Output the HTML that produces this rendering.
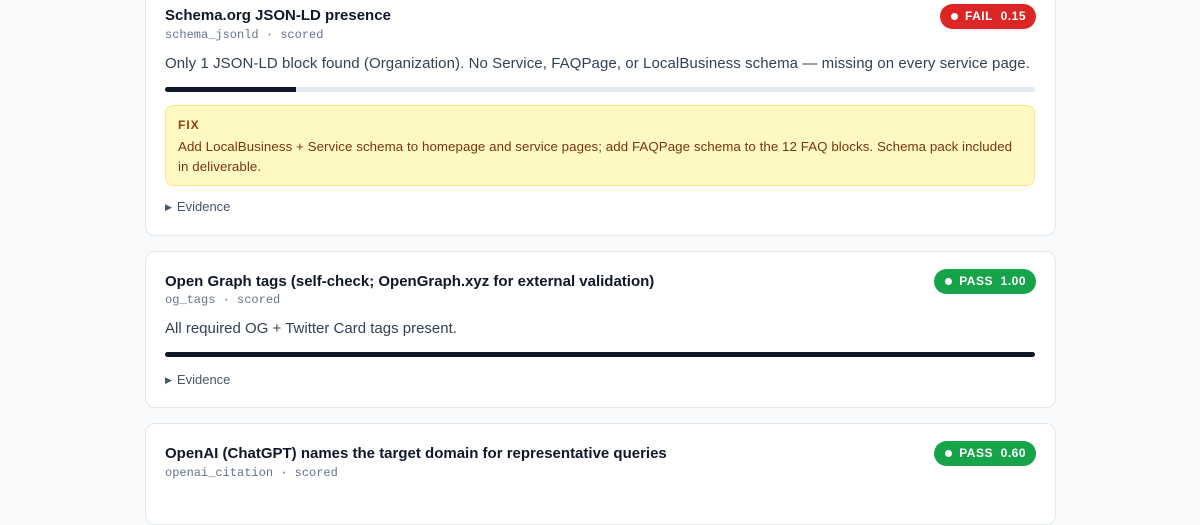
<!DOCTYPE html>
<html><head><style>
body{margin:0;width:1200px;height:470px;overflow:hidden;background:#f8fafc;font-family:"Liberation Sans",sans-serif;position:relative}
.card{position:absolute;left:145px;width:909px;background:#fff;border:1px solid #e2e8f0;border-radius:10px}
.a{position:absolute;white-space:nowrap}
.t{left:19px;font-size:15px;font-weight:bold;color:#0f172a}
.m{left:19px;font-family:"Liberation Mono",monospace;font-size:12px;color:#64748b}
.b{left:19px;font-size:15px;color:#334155}
.bar{left:19px;width:870px;height:5px;background:#e2e8f0;border-radius:3px;overflow:hidden}
.bar i{display:block;height:100%;background:#0f172a}
.ev{left:19px;font-size:13px;color:#475569}
.ev span{font-size:9px;margin-right:5px;position:relative;top:-1px}
.badge{right:19px;height:25px;border-radius:13px;color:#fff;font-size:12px;font-weight:bold;letter-spacing:.5px;line-height:25px;padding:0 10px 0 25px}
.badge:before{content:"";position:absolute;left:11px;top:9px;width:7px;height:7px;border-radius:50%;background:#fff}
</style></head><body>
<div class="card" style="top:-15px;height:249px">
 <div class="a t" style="top:21px">Schema.org JSON-LD presence</div>
 <div class="a m" style="top:42px">schema_jsonld · scored</div>
 <div class="a b" style="top:69px;letter-spacing:.08px">Only 1 JSON-LD block found (Organization). No Service, FAQPage, or LocalBusiness schema — missing on every service page.</div>
 <div class="a bar" style="top:101px"><i style="width:131px"></i></div>
 <div class="a" style="left:19px;top:119px;width:868px;height:79px;background:#fef9c3;border:1px solid #fde68a;border-radius:8px">
  <div class="a" style="left:12px;top:12px;font-size:12px;font-weight:bold;color:#92400e;letter-spacing:1px">FIX</div>
  <div class="a" style="left:12px;top:31px;font-size:13.3px;letter-spacing:.07px;line-height:20px;color:#78350f">Add LocalBusiness + Service schema to homepage and service pages; add FAQPage schema to the 12 FAQ blocks. Schema pack included<br>in deliverable.</div>
 </div>
 <div class="a ev" style="top:213px"><span>▶</span>Evidence</div>
 <div class="a badge" style="top:18px;background:#dc2626">FAIL&nbsp;&nbsp;0.15</div>
</div>
<div class="card" style="top:251px;height:155px">
 <div class="a t" style="top:21px">Open Graph tags (self-check; OpenGraph.xyz for external validation)</div>
 <div class="a m" style="top:41px">og_tags · scored</div>
 <div class="a b" style="top:68px">All required OG + Twitter Card tags present.</div>
 <div class="a bar" style="top:100px"><i style="width:100%"></i></div>
 <div class="a ev" style="top:120px"><span>▶</span>Evidence</div>
 <div class="a badge" style="top:17px;background:#16a34a">PASS&nbsp;&nbsp;1.00</div>
</div>
<div class="card" style="top:423px;height:100px">
 <div class="a t" style="top:21px">OpenAI (ChatGPT) names the target domain for representative queries</div>
 <div class="a m" style="top:42px">openai_citation · scored</div>
 <div class="a badge" style="top:17px;background:#16a34a">PASS&nbsp;&nbsp;0.60</div>
</div>
</body></html>
